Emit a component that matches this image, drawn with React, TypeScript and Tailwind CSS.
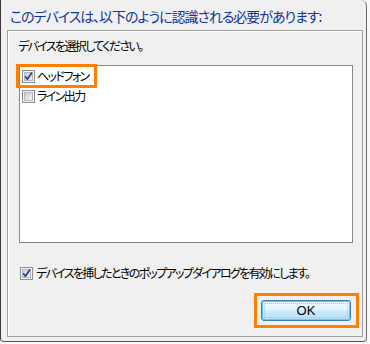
import React from "react";

const FONT = "[font-family:'Noto_Sans_CJK_JP','Noto_Sans',sans-serif]";

function CheckBox({ checked }: { checked: boolean }) {
  return (
    <svg width="13" height="13" viewBox="0 0 13 13" className="shrink-0">
      <defs>
        <linearGradient id="cbg" x1="0" y1="0" x2="1" y2="1">
          <stop offset="0" stopColor="#c6cad0" />
          <stop offset="1" stopColor="#f6f6f6" />
        </linearGradient>
      </defs>
      <rect x="0.5" y="0.5" width="12" height="12" fill="#f4f4f4" stroke="#8e8f8f" />
      <rect x="2.5" y="2.5" width="8" height="8" fill="url(#cbg)" stroke="#b4b8be" />
      {checked && (
        <path d="M3.2 6.4 L5.4 9.2 L10 2.6" fill="none" stroke="#2b3f91" strokeWidth="1.7" strokeLinejoin="round" />
      )}
    </svg>
  );
}

export default function App() {
  return (
    <div className={`w-[370px] h-[344px] bg-[#f7f9fb] overflow-hidden ${FONT} [font-feature-settings:'palt']`}>
      <div className="w-[367px] h-[342px] bg-[#f0f0f0] border-l border-r border-b border-l-[#3a3a3a] border-r-[#6a6a6a] border-b-[#5a5a5a] rounded-tr-[6px] rounded-bl-[4px] rounded-br-[4px] flex flex-col">
        <div className="h-[30px] pl-[9px] pt-[6px] text-[14px] leading-[20px] tracking-[-1.05px] text-[#103696] whitespace-nowrap">
          このデバイスは、以下のように認識される必要があります:
        </div>
        <div className="ml-[6px] mr-[3px] h-[307px] border border-[#a0a0a0] shadow-[inset_1px_1px_0_#ffffff] flex flex-col">
          <div className="pl-[10px] pt-[7px] text-[12px] leading-[16px] tracking-[-1.65px] text-black whitespace-nowrap">
            デバイスを選択してください。
          </div>
          <div className="ml-[11px] mr-[9px] mt-[11px] h-[178px] border border-[#828790] bg-white flex flex-col">
            <div className="relative h-[20px] pl-[2px] flex items-center gap-[2px] text-[12px] leading-[16px] tracking-[-1.6px] text-black">
              <CheckBox checked />
              <span className="whitespace-nowrap">ヘッドフォン</span>
              <div className="absolute left-[-4px] top-[-2px] w-[81px] h-[24px] border-[3px] border-[#ff8000]" />
            </div>
            <div className="h-[20px] pl-[2px] flex items-center gap-[2px] text-[12px] leading-[16px] tracking-[-1.6px] text-black">
              <CheckBox checked={false} />
              <span className="whitespace-nowrap">ライン出力</span>
            </div>
          </div>
          <div className="ml-[12px] mt-[22px] h-[16px] flex items-center gap-[3px] text-[12px] leading-[16px] tracking-[-1.67px] text-black">
            <CheckBox checked />
            <span className="whitespace-nowrap">デバイスを挿したときのポップアップダイアログを有効にします。</span>
          </div>
          <div className="mt-[19px] pr-[11px] flex justify-end">
            <div className="relative">
              <div className="relative w-[90px] h-[21px] rounded-[3px] border border-[#3c7fb1] shadow-[inset_0_0_0_1px_#4ed2f7] bg-[linear-gradient(to_bottom,#f2fafe_0%,#e3f4fd_48%,#c9eafb_52%,#b9e2f8_100%)] flex items-center justify-center text-[13px] leading-[16px] text-black [font-family:'Liberation_Sans',sans-serif]">
                <div className="absolute inset-[2px] border border-dotted border-[#8fc9e8] rounded-[1px]" />
                OK
              </div>
              <div className="absolute left-[-7px] top-[-7px] w-[105px] h-[35px] border-[3px] border-[#ff8000]" />
            </div>
          </div>
        </div>
      </div>
    </div>
  );
}
